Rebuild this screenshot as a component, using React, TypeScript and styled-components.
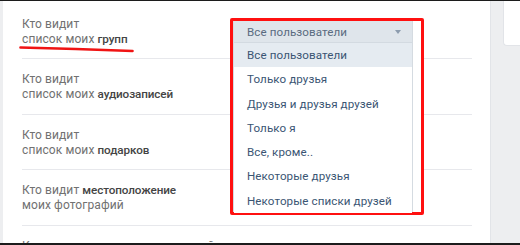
import React from "react";
import styled, { createGlobalStyle } from "styled-components";

const Global = createGlobalStyle`
  html, body { margin: 0; padding: 0; background: #ffffff; }
  * { box-sizing: border-box; }
`;

const Frame = styled.div`
  position: relative;
  width: 520px;
  height: 245px;
  overflow: hidden;
  display: flex;
  background: #edeef0;
  border-top: 1px solid #1c1c1c;
  border-bottom: 2px solid #1c1c1c;
  padding-left: 3px;
  font-family: Roboto, "Noto Sans", Arial, sans-serif;
`;

const Main = styled.div`
  width: 488px;
  flex: none;
  background: #ffffff;
  border-right: 1px solid #e2e4e8;
  padding: 2.5px 18px 0 19px;
`;

const Side = styled.div`
  flex: 1;
  padding-left: 12px;
`;

const SideCard = styled.div`
  height: 45px;
  background: #ffffff;
  border: 1px solid #e2e4e8;
  border-right: none;
  border-top: none;
  border-radius: 0 0 0 4px;
`;

const Row = styled.div`
  padding: 13px 0 11.67px;
  border-bottom: 1px solid #e7e8ec;
  font-size: 12px;
  line-height: 15px;
  letter-spacing: 0.1px;
  color: #717171;
`;

const Line = styled.div`
  white-space: nowrap;
`;

const Strong = styled.span`
  font-weight: 500;
  font-size: 11.7px;
  letter-spacing: -0.1px;
  color: #444444;
`;

const Underline = styled.svg`
  position: absolute;
  left: 0;
  top: 0;
  pointer-events: none;
`;

const RedBox = styled.div`
  position: absolute;
  left: 230px;
  top: 17px;
  width: 194px;
  height: 197px;
  border: 3px solid #ff1010;
  border-radius: 2px;
  background: #ffffff;
  padding-right: 8px;
  display: flex;
`;

const Dropdown = styled.div`
  width: 180px;
  display: flex;
  flex-direction: column;
  border-left: 1px solid #d5dbe1;
  border-right: 1px solid #d5dbe1;
  font-size: 11.6px;
  letter-spacing: 0.1px;
`;

const SelectHead = styled.div`
  height: 22px;
  flex: none;
  display: flex;
  align-items: center;
  justify-content: space-between;
  padding: 0 11px 0 13px;
  background: #dfe5eb;
  border-bottom: 1px solid #d3dae1;
  color: #5a6b80;
`;

const Arrow = styled.span`
  width: 0;
  height: 0;
  border-left: 3.5px solid transparent;
  border-right: 3.5px solid transparent;
  border-top: 4px solid #8d9cae;
`;

const Option = styled.div<{ $active?: boolean }>`
  height: 24.3px;
  line-height: 24.3px;
  padding-left: 13px;
  white-space: nowrap;
  color: #3a5573;
  background: ${(p) => (p.$active ? "#e5ebf1" : "#ffffff")};
`;

const options = [
  "Все пользователи",
  "Только друзья",
  "Друзья и друзья друзей",
  "Только я",
  "Все, кроме..",
  "Некоторые друзья",
  "Некоторые списки друзей",
];

export default function App() {
  return (
    <>
      <Global />
      <Frame>
        <Main>
          <Row>
            <Line>Кто видит</Line>
            <Line>
              список моих <Strong>групп</Strong>
            </Line>
          </Row>
          <Row>
            <Line>Кто видит</Line>
            <Line>
              список моих <Strong>аудиозаписей</Strong>
            </Line>
          </Row>
          <Row>
            <Line>Кто видит</Line>
            <Line>
              список моих <Strong>подарков</Strong>
            </Line>
          </Row>
          <Row>
            <Line>
              Кто видит <Strong>местоположение</Strong>
            </Line>
            <Line>моих фотографий</Line>
          </Row>
          <Row>
            <Line>Кого видно в списке моих друзей и подписок</Line>
          </Row>
        </Main>
        <Side>
          <SideCard />
        </Side>
        <Underline width="160" height="60" viewBox="0 0 160 60">
          <path
            d="M20.5 46.5 Q 75 47.7 132.5 50"
            stroke="#f01414"
            strokeWidth="2.6"
            fill="none"
            strokeLinecap="round"
          />
        </Underline>
        <RedBox>
          <Dropdown>
            <SelectHead>
              <span>Все пользователи</span>
              <Arrow />
            </SelectHead>
            {options.map((o, i) => (
              <Option key={o} $active={i === 0}>
                {o}
              </Option>
            ))}
          </Dropdown>
        </RedBox>
      </Frame>
    </>
  );
}
